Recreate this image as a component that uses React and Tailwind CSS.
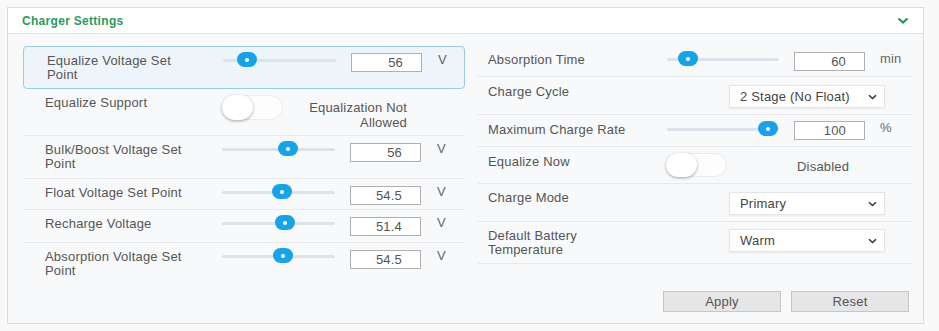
import React from "react";

const F = "font-['Liberation_Sans',Arial,sans-serif]";

function Slider({ pos, w }) {
  return (
    <div className="relative flex h-[14px] shrink-0 items-center" style={{ width: w }}>
      <div className="h-[3px] w-full rounded-full bg-[#dde2ea]" />
      <div
        className="absolute top-[-1px] flex h-[15px] w-[20px] items-center justify-center rounded-full bg-[#17a3e6]"
        style={{ left: pos - 10 }}
      >
        <div className="h-[4px] w-[4px] rounded-full bg-white" />
      </div>
    </div>
  );
}

function NumInput({ value, mt = "mt-[7px]" }) {
  return (
    <div
      className={`${mt} flex h-[19px] w-[71px] shrink-0 items-center justify-end border border-[#b0b0b0] bg-white pr-[18px] text-[13px] tracking-[0.2px] text-[#555]`}
    >
      {value}
    </div>
  );
}

function Toggle({ mt = "mt-[6px]", h = "h-[25px]" }) {
  return (
    <div className={`${mt} ${h} relative w-[61px] shrink-0 rounded-full border border-[#ececec] bg-[#fdfdfd]`}>
      <div className="absolute left-[-1px] top-[-1px] h-[calc(100%+2px)] w-[31px] rounded-full bg-white shadow-[0_1px_3px_rgba(0,0,0,0.35)]" />
    </div>
  );
}

function Select({ value, mt }) {
  return (
    <div
      className={`${mt} ml-[62px] flex h-[23px] w-[156px] shrink-0 items-center justify-between border border-[#e4e4e4] bg-white pl-[10px] pr-[7px] text-[13px] tracking-[0.2px] text-[#444] shadow-[0_1px_2px_rgba(0,0,0,0.06)]`}
    >
      <span>{value}</span>
      <svg width="9" height="6" viewBox="0 0 9 6">
        <path d="M1 1.2 L4.5 4.5 L8 1.2" fill="none" stroke="#333" strokeWidth="1.5" />
      </svg>
    </div>
  );
}

function Label({ children, w, mt = "mt-[7px]" }) {
  return (
    <div className={`${mt} shrink-0 text-[13px] leading-[14px] tracking-[0.2px] text-[#555]`} style={{ width: w }}>
      {children}
    </div>
  );
}

function LeftSliderRow({ label, pos, value, h, border = true, highlight = false }) {
  const base = highlight
    ? "rounded-[4px] border border-[#9fcbe2] bg-[#edf5fa] pl-[23px]"
    : `${border ? "border-b border-[#e6e8ec]" : ""} pl-[22px]`;
  return (
    <div className={`flex items-start ${base}`} style={{ height: h }}>
      <Label w={highlight ? 176 : 177} mt="mt-[7px]">
        {label}
      </Label>
      <div className="mt-[6px]">
        <Slider pos={pos} w={113} />
      </div>
      <div className="ml-[15px]">
        <NumInput value={value} mt={highlight ? "mt-[6px]" : "mt-[7px]"} />
      </div>
      <div className="ml-[16px] mt-[6px] text-[13px] leading-[14px] text-[#666]">V</div>
    </div>
  );
}

export default function App() {
  return (
    <div className={`${F} min-h-[331px] w-[939px] bg-[#f9f9f9] pt-[7px] pl-[7px]`}>
      <div className="h-[317px] w-[917px] border border-[#dcdcdc] bg-[#f8f9fb]">
        <div className="flex h-[26px] items-center justify-between border-b border-[#e1e3e7] bg-white pl-[14px] pr-[14px]">
          <span className="text-[12px] font-bold tracking-[0.3px] text-[#2a9b5e]">Charger Settings</span>
          <svg width="12" height="8" viewBox="0 0 12 8">
            <path d="M1.5 1.5 L6 5.5 L10.5 1.5" fill="none" stroke="#1f9a58" strokeWidth="2.2" />
          </svg>
        </div>

        <div className="flex pl-[15px] pt-[12px]">
          {/* Left column */}
          <div className="flex w-[442px] flex-col">
            <LeftSliderRow label={<>Equalize Voltage Set<br />Point</>} pos={24} value="56" h={43} highlight />
            <div className="flex items-start border-b border-[#e6e8ec] pl-[22px]" style={{ height: 47 }}>
              <Label w={177}>Equalize Support</Label>
              <Toggle />
              <div className="mt-[11px] w-[124px] text-right text-[13px] leading-[15px] tracking-[0.2px] text-[#555]">
                Equalization Not
                <br />
                Allowed
              </div>
            </div>
            <LeftSliderRow label={<>Bulk/Boost Voltage Set<br />Point</>} pos={66} value="56" h={43} />
            <LeftSliderRow label="Float Voltage Set Point" pos={60} value="54.5" h={31} />
            <LeftSliderRow label="Recharge Voltage" pos={63} value="51.4" h={33} />
            <LeftSliderRow label={<>Absorption Voltage Set<br />Point</>} pos={61} value="54.5" h={37} border={false} />
          </div>

          {/* Right column */}
          <div className="ml-[13px] flex w-[434px] flex-col">
            <div className="flex items-start border-b border-[#e6e8ec] pl-[10px]" style={{ height: 31 }}>
              <Label w={179}>Absorption Time</Label>
              <div className="mt-[6px]">
                <Slider pos={21} w={112} />
              </div>
              <div className="ml-[15px]">
                <NumInput value="60" mt="mt-[6px]" />
              </div>
              <div className="ml-[15px] mt-[6px] text-[13px] leading-[14px] tracking-[0.2px] text-[#666]">min</div>
            </div>
            <div className="flex items-start border-b border-[#e6e8ec] pl-[10px]" style={{ height: 38 }}>
              <Label w={179} mt="mt-[8px]">Charge Cycle</Label>
              <Select value="2 Stage (No Float)" mt="mt-[8px]" />
            </div>
            <div className="flex items-start border-b border-[#e6e8ec] pl-[10px]" style={{ height: 32 }}>
              <Label w={179} mt="mt-[8px]">Maximum Charge Rate</Label>
              <div className="mt-[7px]">
                <Slider pos={101} w={112} />
              </div>
              <div className="ml-[15px]">
                <NumInput value="100" mt="mt-[6px]" />
              </div>
              <div className="ml-[15px] mt-[6px] text-[13px] leading-[14px] text-[#666]">%</div>
            </div>
            <div className="flex items-start border-b border-[#e6e8ec] pl-[10px]" style={{ height: 37 }}>
              <Label w={178} mt="mt-[8px]">Equalize Now</Label>
              <Toggle mt="mt-[6px]" h="h-[24px]" />
              <div className="ml-[70px] mt-[13px] text-[13px] leading-[14px] tracking-[0.2px] text-[#555]">Disabled</div>
            </div>
            <div className="flex items-start border-b border-[#e6e8ec] pl-[10px]" style={{ height: 38 }}>
              <Label w={179} mt="mt-[7px]">Charge Mode</Label>
              <Select value="Primary" mt="mt-[8px]" />
            </div>
            <div className="flex items-start border-b border-[#e6e8ec] pl-[10px]" style={{ height: 42 }}>
              <Label w={179} mt="mt-[7px]">
                Default Battery
                <br />
                Temperature
              </Label>
              <Select value="Warm" mt="mt-[7px]" />
            </div>
            <div className="mt-[27px] flex justify-end gap-[10px] pr-[3px]">
              <button className="flex h-[21px] w-[118px] items-center justify-center border border-[#c6c6c6] bg-[#e6e6e6] text-[13px] tracking-[0.2px] text-[#555]">
                Apply
              </button>
              <button className="flex h-[21px] w-[118px] items-center justify-center border border-[#c6c6c6] bg-[#e6e6e6] text-[13px] tracking-[0.2px] text-[#555]">
                Reset
              </button>
            </div>
          </div>
        </div>
      </div>
    </div>
  );
}
